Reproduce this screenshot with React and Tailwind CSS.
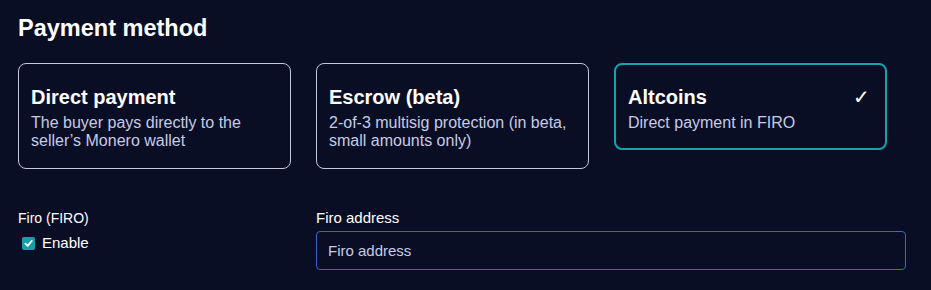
import React from "react";

function Card({ title, desc, selected }) {
  return (
    <div
      className={
        "w-[273px] rounded-lg px-3 " +
        (selected
          ? "border-2 border-[#16a1ab] pt-[20px] pb-[16px] self-start"
          : "border border-[#c4c8df] pt-[21px] pb-[18px]")
      }
    >
      <div className="flex items-start justify-between">
        <div className="text-[20px] leading-6 font-bold text-white">{title}</div>
        {selected && (
          <span className="text-[20px] leading-6 text-white mr-[3px]">✓</span>
        )}
      </div>
      <div className="text-[16px] leading-[18px] text-[#c6cbe5] mt-[5px]">{desc}</div>
    </div>
  );
}

export default function App() {
  return (
    <div
      className="w-[931px] h-[290px] bg-[#0a0e25] px-[18px] pt-[14px]"
      style={{ fontFamily: '"Liberation Sans", Arial, sans-serif' }}
    >
      <h1 className="text-[23.5px] leading-7 font-bold text-white">Payment method</h1>
      <div className="flex gap-[25px] mt-[21px] items-stretch">
        <Card
          title="Direct payment"
          desc={<>The buyer pays directly to the<br />seller’s Monero wallet</>}
        />
        <Card
          title="Escrow (beta)"
          desc={<>2-of-3 multisig protection (in beta,<br />small amounts only)</>}
        />
        <Card title="Altcoins" desc="Direct payment in FIRO" selected />
      </div>
      <div className="flex mt-[39px]">
        <div className="w-[298px]">
          <div className="text-[14px] leading-5 text-white">Firo (FIRO)</div>
          <label className="flex items-center gap-[7px] mt-[5px] ml-[4px]">
            <span className="w-[13px] h-[13px] rounded-[2px] bg-[#1a9caa] flex items-center justify-center">
              <svg width="9" height="9" viewBox="0 0 10 10">
                <path d="M1.5 5.2 L4 7.6 L8.6 2.2" stroke="white" strokeWidth="2" fill="none" strokeLinecap="round" strokeLinejoin="round" />
              </svg>
            </span>
            <span className="text-[15px] leading-5 text-white">Enable</span>
          </label>
        </div>
        <div className="w-[590px]">
          <div className="text-[15px] leading-5 text-white">Firo address</div>
          <div className="mt-[3px] h-[39px] rounded-[4px] border border-[#3d62c8] flex items-center">
            <input
              className="w-full h-full bg-transparent px-[11px] text-[15px] text-white placeholder:text-[#c6cbe5] outline-none border-0"
              placeholder="Firo address"
            />
          </div>
        </div>
      </div>
    </div>
  );
}
